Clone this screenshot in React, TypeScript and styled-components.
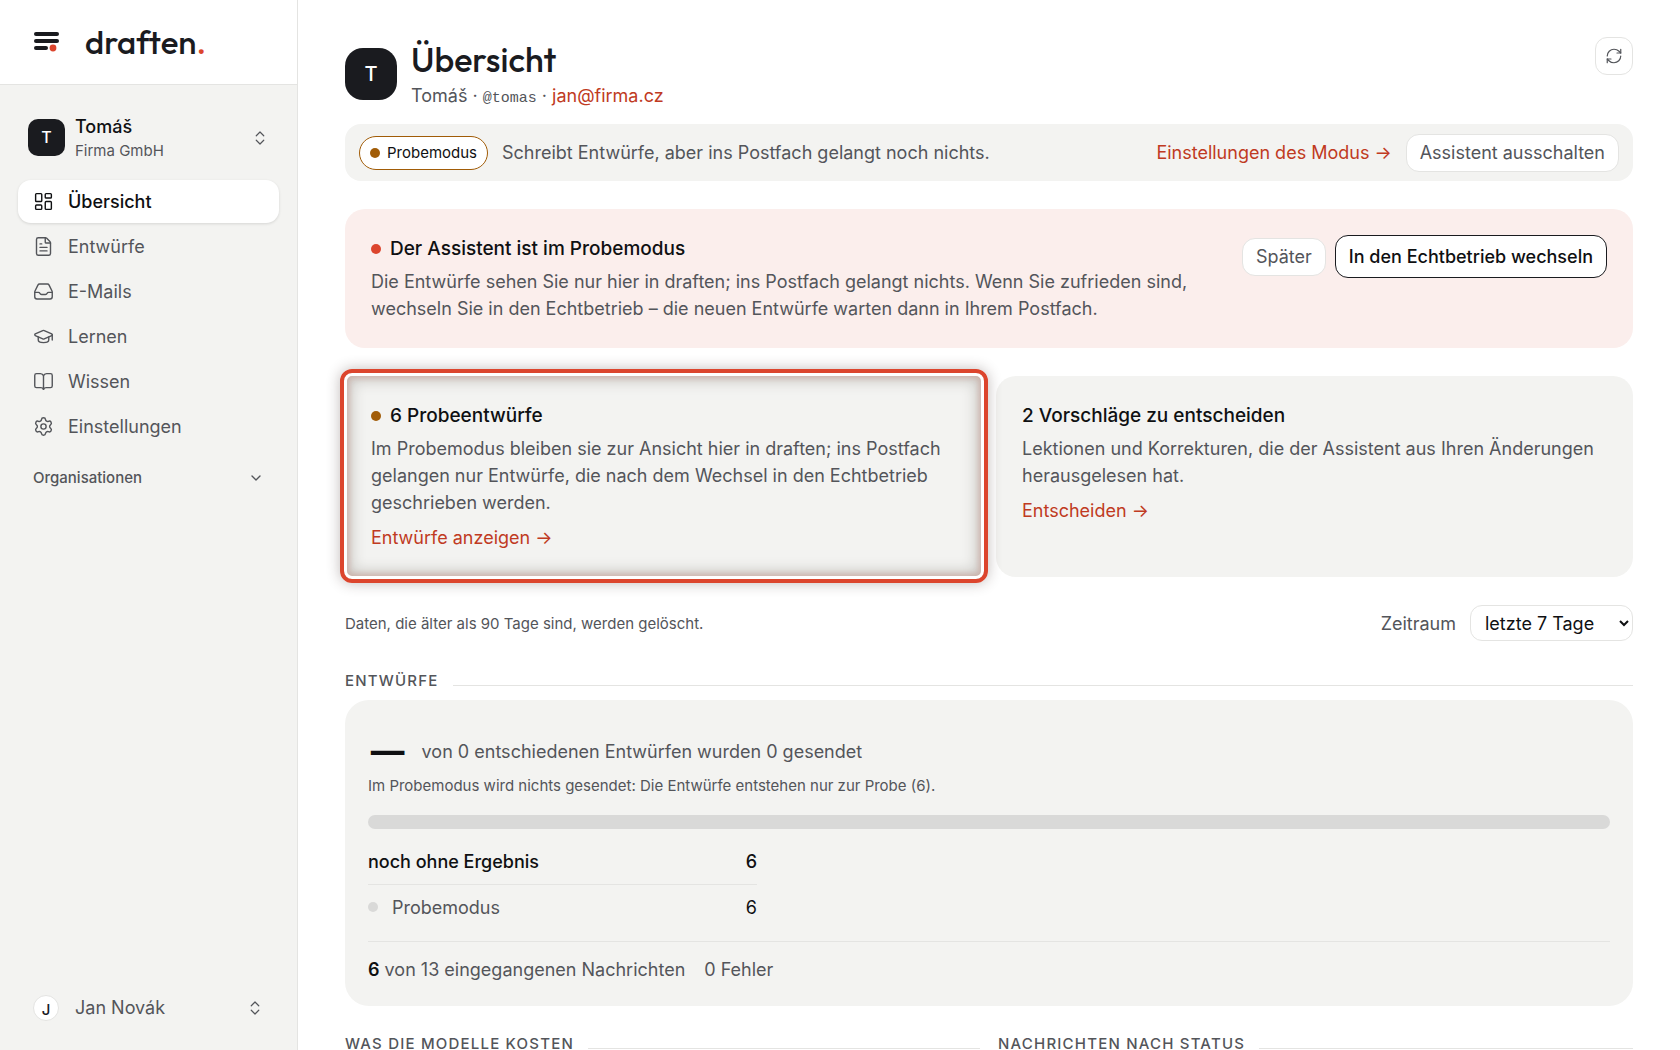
import React from "react";
import styled, { createGlobalStyle, css } from "styled-components";
import {
  ChevronDown,
  ChevronsUpDown,
  FileText,
  GraduationCap,
  LayoutDashboard,
  RefreshCw,
  Settings,
} from "lucide-react";

const color = {
  ink: "#1a1b1f",
  text: "#0f1012",
  muted: "#53555a",
  surface: "#f3f3f1",
  line: "#e4e4e2",
  accent: "#c03a22",
  signal: "#dc452d",
  amber: "#a15c07",
  alert: "#fbeeec",
  track: "#d9d9d8",
};

const sans = `Inter, "Liberation Sans", sans-serif`;
const display = `Outfit, Lato, Inter, sans-serif`;

const GlobalStyle = createGlobalStyle`
  *, *::before, *::after { box-sizing: border-box; }
  body {
    margin: 0;
    background: #fff;
    color: ${color.text};
    font-family: ${sans};
    font-size: 18px;
    line-height: 27px;
  }
  h1, h2, h3, p { margin: 0; }
  button, select { font: inherit; color: inherit; cursor: pointer; }
`;

const Shell = styled.div`
  display: grid;
  grid-template-columns: 298px minmax(0, 1fr);
  height: 100vh;
`;

/* ---------- sidebar ---------- */

const Sidebar = styled.aside`
  display: flex;
  flex-direction: column;
  background: ${color.surface};
  border-right: 1px solid ${color.line};
`;

const Brand = styled.a`
  display: flex;
  align-items: center;
  gap: 25px;
  height: 85px;
  padding: 0 34px;
  background: #fff;
  border-bottom: 1px solid ${color.line};
  color: ${color.ink};
  text-decoration: none;
`;

const Wordmark = styled.span`
  font-family: ${display};
  font-size: 33px;
  font-weight: 500;
  line-height: 40px;
`;

const WordmarkDot = styled.span`
  color: ${color.signal};
`;

const Switcher = styled.button<{ $foot?: boolean }>`
  display: flex;
  align-items: center;
  gap: ${(p) => (p.$foot ? 16 : 10)}px;
  margin: ${(p) => (p.$foot ? "auto 18px 20px" : "27px 18px 17px")};
  padding: ${(p) => (p.$foot ? "9px 15px" : "0 10px")};
  border: 0;
  background: none;
  text-align: left;
  color: ${color.muted};

  svg {
    margin-left: auto;
  }
`;

const Monogram = styled.span<{ $size: number; $radius: number; $light?: boolean }>`
  display: grid;
  flex: none;
  place-items: center;
  width: ${(p) => p.$size}px;
  height: ${(p) => p.$size}px;
  border-radius: ${(p) => p.$radius}px;
  background: ${(p) => (p.$light ? "#fff" : color.ink)};
  border: ${(p) => (p.$light ? `1px solid ${color.line}` : "0")};
  color: ${(p) => (p.$light ? color.ink : "#fff")};
  font-size: ${(p) => (p.$size > 40 ? 20 : p.$size > 30 ? 16 : 15)}px;
  font-weight: 500;
`;

const SwitcherText = styled.span`
  display: grid;
  padding-top: 3px;
  line-height: 24px;
`;

const Name = styled.strong`
  color: ${color.text};
  font-weight: 500;
`;

const Firm = styled.span`
  font-size: 15px;
`;

const Nav = styled.nav`
  display: grid;
  gap: 2px;
  padding: 0 18px;
`;

const NavItem = styled.a<{ $active?: boolean }>`
  display: flex;
  align-items: center;
  gap: 14px;
  height: 43px;
  padding: 0 15px;
  border-radius: 13px;
  color: ${color.muted};
  text-decoration: none;
  ${(p) =>
    p.$active &&
    css`
      background: #fff;
      color: ${color.text};
      font-weight: 500;
      box-shadow: 0 1px 3px rgba(0, 0, 0, 0.12);
    `}
`;

const GroupToggle = styled.button`
  display: flex;
  align-items: center;
  justify-content: space-between;
  margin: 16px 18px 0;
  padding: 0 15px;
  border: 0;
  background: none;
  color: ${color.muted};
  font-size: 15px;
  font-weight: 500;
  line-height: 27px;
`;

/* ---------- shared parts ---------- */

const Link = styled.a`
  color: ${color.accent};
  text-decoration: none;
`;

const Button = styled.button<{ $strong?: boolean }>`
  height: ${(p) => (p.$strong ? 43 : 38)}px;
  padding: 0 13px;
  border: 1px solid ${(p) => (p.$strong ? color.ink : color.line)};
  border-radius: 13px;
  background: #fff;
  color: ${(p) => (p.$strong ? color.text : color.muted)};
  font-weight: ${(p) => (p.$strong ? 500 : 400)};
  white-space: nowrap;
`;

const IconButton = styled.button`
  display: grid;
  place-items: center;
  width: 38px;
  height: 38px;
  padding: 0;
  border: 1px solid ${color.line};
  border-radius: 12px;
  background: #fff;
  color: ${color.muted};
`;

const Dot = styled.span<{ $color: string }>`
  flex: none;
  width: 10px;
  height: 10px;
  border-radius: 50%;
  background: ${(p) => p.$color};
`;

const Small = styled.p`
  color: ${color.muted};
  font-size: 15px;
`;

/* ---------- main ---------- */

const Main = styled.main`
  display: flex;
  flex-direction: column;
  gap: 28px;
  padding: 37px 47px;
  overflow-y: auto;
  scrollbar-width: none;

  > * {
    flex: none;
  }
`;

const Top = styled.div`
  display: grid;
  gap: 15px;
`;

const PageHead = styled.header`
  display: flex;
  align-items: flex-start;
  justify-content: space-between;
`;

const Identity = styled.div`
  display: flex;
  align-items: flex-end;
  gap: 14px;
`;

const IdentityMark = styled.div`
  padding-bottom: 9px;
`;

const Title = styled.h1`
  color: ${color.ink};
  font-family: ${display};
  font-size: 34px;
  font-weight: 500;
  line-height: 45px;
`;

const Meta = styled.p`
  color: ${color.muted};
`;

const Handle = styled.code`
  font-family: "Liberation Mono", monospace;
  font-size: 15px;
  line-height: 1;
`;

const ModeBar = styled.section`
  display: flex;
  align-items: center;
  gap: 14px;
  height: 57px;
  padding: 0 14px;
  border-radius: 16px;
  background: ${color.surface};
  color: ${color.muted};
`;

const Pill = styled.span`
  display: flex;
  align-items: center;
  gap: 7px;
  height: 34px;
  padding: 0 10px;
  border: 1px solid ${color.amber};
  border-radius: 17px;
  background: #fff;
  color: ${color.text};
  font-size: 15px;
`;

const Spacer = styled.span`
  flex: 1;
`;

const Notice = styled.section`
  display: flex;
  align-items: flex-start;
  justify-content: space-between;
  padding: 26px;
  border-radius: 20px;
  background: ${color.alert};
`;

const Copy = styled.div`
  display: grid;
  gap: 6px;
  max-width: 820px;
  color: ${color.muted};
`;

const CopyTitle = styled.h2`
  display: flex;
  align-items: center;
  gap: 9px;
  color: ${color.text};
  font-size: 19px;
  font-weight: 500;
  line-height: 27px;
`;

const Actions = styled.div`
  display: flex;
  align-items: center;
  gap: 9px;
`;

const Cards = styled.div`
  display: grid;
  grid-template-columns: 1fr 1fr;
  gap: 14px;
`;

const Card = styled.section<{ $marked?: boolean }>`
  position: relative;
  display: grid;
  align-content: start;
  gap: 8px;
  padding: 26px;
  border-radius: ${(p) => (p.$marked ? 6 : 20)}px;
  background: ${color.surface};
  ${(p) =>
    p.$marked &&
    css`
      z-index: 1;
      &::after {
        content: "";
        position: absolute;
        inset: -7px -6px -6px -5px;
        border: 4px solid ${color.signal};
        border-radius: 12px;
        pointer-events: none;
        box-shadow:
          0 0 14px rgba(50, 30, 25, 0.3),
          inset 0 0 0 3px #fff,
          inset 0 0 5px 6px rgba(190, 70, 50, 0.18),
          inset 0 0 14px 8px rgba(60, 55, 45, 0.22);
      }
    `}
`;

const Filter = styled.div`
  display: flex;
  align-items: center;
  justify-content: space-between;
`;

const Period = styled.label`
  display: flex;
  align-items: center;
  gap: 14px;
  color: ${color.muted};
`;

const Select = styled.select`
  width: 163px;
  height: 36px;
  padding: 0 0 0 10px;
  border: 1px solid ${color.line};
  border-radius: 12px;
  background: #fff;
  color: ${color.text};
`;

const Reports = styled.div`
  display: grid;
  gap: 26px;
`;

const Section = styled.section`
  display: grid;
  gap: 7px;
`;

const SectionTitle = styled.h2`
  display: flex;
  align-items: baseline;
  gap: 14px;
  color: ${color.muted};
  font-size: 15px;
  font-weight: 500;
  line-height: 24px;
  letter-spacing: 0.08em;
  text-transform: uppercase;

  &::after {
    content: "";
    flex: 1;
    height: 1px;
    background: ${color.line};
  }
`;

const Panel = styled.div`
  padding: 30px 23px 23px;
  border-radius: 24px;
  background: ${color.surface};
`;

const Headline = styled.p`
  display: flex;
  align-items: center;
  gap: 14px;
  height: 42px;
  color: ${color.muted};
`;

const Figure = styled.strong`
  padding-bottom: 6px;
  color: ${color.text};
  font-family: ${display};
  font-size: 46px;
  font-weight: 500;
`;

const Track = styled.div`
  height: 14px;
  margin: 16px 0 11px;
  border-radius: 7px;
  background: ${color.track};
`;

const Results = styled.table`
  width: 389px;
  border-collapse: collapse;
  color: ${color.muted};

  th,
  td {
    height: 46px;
    padding: 0;
    font-weight: 400;
    text-align: left;
  }
  td {
    color: ${color.text};
    text-align: right;
  }
  thead th,
  thead td {
    height: 44px;
    border-bottom: 1px solid ${color.line};
    color: ${color.text};
    font-weight: 500;
  }
`;

const Entry = styled.span`
  display: flex;
  align-items: center;
  gap: 14px;
`;

const Totals = styled.p`
  display: flex;
  gap: 19px;
  margin-top: 11px;
  padding-top: 14px;
  border-top: 1px solid ${color.line};
  color: ${color.muted};

  b {
    color: ${color.text};
    font-weight: 600;
  }
`;

const Columns = styled.div`
  display: grid;
  grid-template-columns: 1fr 1fr;
  gap: 18px;
`;

/* ---------- drawings ---------- */

const LogoMark = () => (
  <svg width="26" height="22" viewBox="0 0 26 22" aria-hidden="true">
    <g fill={color.ink}>
      <rect x="0" y="1" width="25" height="4" rx="2" />
      <rect x="0" y="8" width="25" height="4" rx="2" />
      <rect x="0" y="15" width="14" height="4" rx="2" />
    </g>
    <circle cx="19" cy="17" r="3.4" fill={color.signal} />
  </svg>
);

const Glyph = ({ children }: { children: React.ReactNode }) => (
  <svg
    width="21"
    height="21"
    viewBox="0 0 24 24"
    fill="none"
    stroke="currentColor"
    strokeWidth="1.6"
    strokeLinecap="round"
    strokeLinejoin="round"
    aria-hidden="true"
  >
    {children}
  </svg>
);

const TrayIcon = () => (
  <Glyph>
    <path d="M2 13h4.2c.8 0 1.300.4 1.600 1.100.4.9 1 1.400 2 1.400h4.400c1 0 1.600-.5 2-1.400.3-.7.8-1.100 1.600-1.100H22" />
    <path d="M5.600 4.700 2.300 11.500a3 3 0 0 0-.3 1.300V18a2.500 2.500 0 0 0 2.500 2.500h15A2.500 2.500 0 0 0 22 18v-5.200a3 3 0 0 0-.3-1.300l-3.300-6.800A2.200 2.200 0 0 0 16.400 3.500H7.600a2.200 2.200 0 0 0-2 1.200z" />
  </Glyph>
);

const BookIcon = () => (
  <Glyph>
    <path d="M12 5.500V21" />
    <path d="M12 5.500C11.500 4 10.300 3 8.500 3H4a2 2 0 0 0-2 2v12a2 2 0 0 0 2 2h5c1.500 0 2.500.7 3 2 .5-1.300 1.500-2 3-2h5a2 2 0 0 0 2-2V5a2 2 0 0 0-2-2h-4.500c-1.800 0-3 1-3.500 2.500z" />
  </Glyph>
);

const iconProps = { size: 21, strokeWidth: 1.6 };

const nav = [
  { label: "Übersicht", icon: <LayoutDashboard {...iconProps} />, active: true },
  { label: "Entwürfe", icon: <FileText {...iconProps} /> },
  { label: "E-Mails", icon: <TrayIcon /> },
  { label: "Lernen", icon: <GraduationCap {...iconProps} /> },
  { label: "Wissen", icon: <BookIcon /> },
  { label: "Einstellungen", icon: <Settings {...iconProps} /> },
];

export default function App() {
  return (
    <>
      <GlobalStyle />
      <Shell>
        <Sidebar>
          <Brand href="#">
            <LogoMark />
            <Wordmark>
              draften<WordmarkDot>.</WordmarkDot>
            </Wordmark>
          </Brand>
          <Switcher type="button">
            <Monogram $size={37} $radius={10}>T</Monogram>
            <SwitcherText>
              <Name>Tomáš</Name>
              <Firm>Firma GmbH</Firm>
            </SwitcherText>
            <ChevronsUpDown size={18} strokeWidth={1.6} />
          </Switcher>
          <Nav>
            {nav.map((item) => (
              <NavItem href="#" key={item.label} $active={item.active}>
                {item.icon}
                {item.label}
              </NavItem>
            ))}
          </Nav>
          <GroupToggle type="button">
            Organisationen
            <ChevronDown size={16} strokeWidth={2} />
          </GroupToggle>
          <Switcher type="button" $foot>
            <Monogram $size={26} $radius={13} $light>J</Monogram>
            Jan Novák
            <ChevronsUpDown size={18} strokeWidth={1.6} />
          </Switcher>
        </Sidebar>

        <Main>
          <Top>
            <PageHead>
              <Identity>
                <IdentityMark>
                  <Monogram $size={52} $radius={18}>T</Monogram>
                </IdentityMark>
                <div>
                  <Title>Übersicht</Title>
                  <Meta>
                    Tomáš · <Handle>@tomas</Handle> · <Link href="#">jan@firma.cz</Link>
                  </Meta>
                </div>
              </Identity>
              <IconButton type="button" aria-label="Aktualisieren">
                <RefreshCw size={18} strokeWidth={1.6} />
              </IconButton>
            </PageHead>
            <ModeBar>
              <Pill>
                <Dot $color={color.amber} />
                Probemodus
              </Pill>
              <span>Schreibt Entwürfe, aber ins Postfach gelangt noch nichts.</span>
              <Spacer />
              <Link href="#">Einstellungen des Modus →</Link>
              <Button type="button">Assistent ausschalten</Button>
            </ModeBar>
          </Top>

          <Notice>
            <Copy>
              <CopyTitle>
                <Dot $color={color.signal} />
                Der Assistent ist im Probemodus
              </CopyTitle>
              <p>
                Die Entwürfe sehen Sie nur hier in draften; ins Postfach gelangt nichts. Wenn Sie
                zufrieden sind, wechseln Sie in den Echtbetrieb – die neuen Entwürfe warten dann in
                Ihrem Postfach.
              </p>
            </Copy>
            <Actions>
              <Button type="button">Später</Button>
              <Button type="button" $strong>In den Echtbetrieb wechseln</Button>
            </Actions>
          </Notice>

          <Cards>
            <Card $marked>
              <Copy>
                <CopyTitle>
                  <Dot $color={color.amber} />
                  6 Probeentwürfe
                </CopyTitle>
                <p>
                  Im Probemodus bleiben sie zur Ansicht hier in draften; ins Postfach gelangen nur
                  Entwürfe, die nach dem Wechsel in den Echtbetrieb geschrieben werden.
                </p>
              </Copy>
              <Link href="#">Entwürfe anzeigen →</Link>
            </Card>
            <Card>
              <Copy>
                <CopyTitle>2 Vorschläge zu entscheiden</CopyTitle>
                <p>
                  Lektionen und Korrekturen, die der Assistent aus Ihren Änderungen herausgelesen
                  hat.
                </p>
              </Copy>
              <Link href="#">Entscheiden →</Link>
            </Card>
          </Cards>

          <Filter>
            <Small>Daten, die älter als 90 Tage sind, werden gelöscht.</Small>
            <Period>
              Zeitraum
              <Select defaultValue="7">
                <option value="7">letzte 7 Tage</option>
                <option value="30">letzte 30 Tage</option>
              </Select>
            </Period>
          </Filter>

          <Reports>
            <Section>
              <SectionTitle>Entwürfe</SectionTitle>
              <Panel>
                <Headline>
                  <Figure>—</Figure>
                  von 0 entschiedenen Entwürfen wurden 0 gesendet
                </Headline>
                <Small>
                  Im Probemodus wird nichts gesendet: Die Entwürfe entstehen nur zur Probe (6).
                </Small>
                <Track />
                <Results>
                  <thead>
                    <tr>
                      <th scope="col">noch ohne Ergebnis</th>
                      <td>6</td>
                    </tr>
                  </thead>
                  <tbody>
                    <tr>
                      <th scope="row">
                        <Entry>
                          <Dot $color={color.track} />
                          Probemodus
                        </Entry>
                      </th>
                      <td>6</td>
                    </tr>
                  </tbody>
                </Results>
                <Totals>
                  <span>
                    <b>6</b> von 13 eingegangenen Nachrichten
                  </span>
                  <span>0 Fehler</span>
                </Totals>
              </Panel>
            </Section>

            <Columns>
              <SectionTitle>Was die Modelle kosten</SectionTitle>
              <SectionTitle>Nachrichten nach Status</SectionTitle>
            </Columns>
          </Reports>
        </Main>
      </Shell>
    </>
  );
}
